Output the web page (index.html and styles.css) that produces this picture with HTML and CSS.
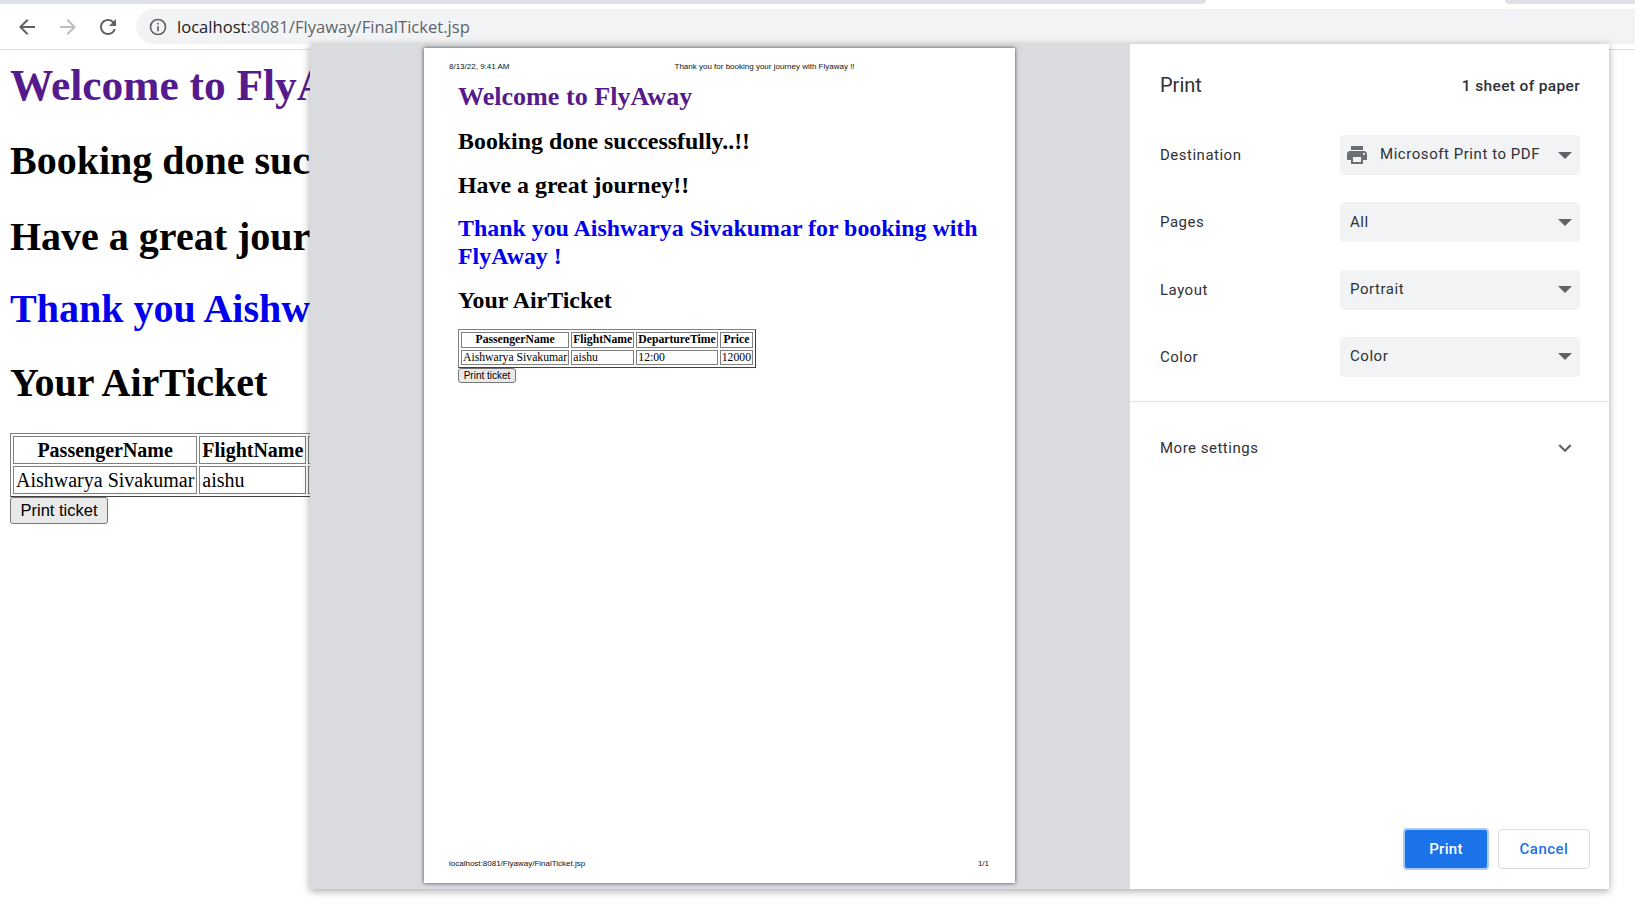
FILE: index.html

```html
<!DOCTYPE html>
<html>
<head>
  <title>FinalTicket</title>
  <link rel="stylesheet" href="styles.css">
</head>
<body>

  <div class="tabstrip">
    <div class="tab-gap left"></div>
    <div class="tab-gap right"></div>
  </div>

  <div class="toolbar">
    <svg class="nav-icon" viewBox="0 0 24 24"><path d="M20 11H7.83l5.59-5.59L12 4l-8 8 8 8 1.41-1.41L7.83 13H20v-2z"/></svg>
    <svg class="nav-icon disabled" viewBox="0 0 24 24"><path d="M4 11h12.17l-5.59-5.59L12 4l8 8-8 8-1.41-1.41L16.17 13H4v-2z"/></svg>
    <svg class="nav-icon" viewBox="0 0 24 24"><path d="M17.65 6.35A7.958 7.958 0 0 0 12 4c-4.42 0-7.99 3.58-7.99 8s3.57 8 7.99 8c3.73 0 6.84-2.55 7.73-6h-2.08A5.99 5.99 0 0 1 12 18c-3.31 0-6-2.69-6-6s2.69-6 6-6c1.66 0 3.14.69 4.22 1.78L13 11h7V4l-2.35 2.35z"/></svg>
    <div class="urlbar">
      <svg class="info-icon" viewBox="0 0 24 24"><path d="M11 7h2v2h-2zm0 4h2v6h-2zm1-9a10 10 0 1 0 0 20 10 10 0 0 0 0-20zm0 18a8 8 0 1 1 0-16 8 8 0 0 1 0 16z"/></svg>
      <span class="host">localhost</span><span class="path">:8081/Flyaway/FinalTicket.jsp</span>
    </div>
  </div>

  <div class="page">
    <h1 class="welcome">Welcome to FlyAway</h1>
    <h2>Booking done successfully..!!</h2>
    <h2>Have a great journey!!</h2>
    <h2 class="thanks">Thank you Aishwarya Sivakumar for booking with FlyAway !</h2>
    <h2>Your AirTicket</h2>
    <table>
      <tr><th>PassengerName</th><th>FlightName</th><th>DepartureTime</th><th>Price</th></tr>
      <tr><td>Aishwarya Sivakumar</td><td>aishu</td><td>12:00</td><td>12000</td></tr>
    </table>
    <button class="ticket-btn">Print ticket</button>
  </div>

  <div class="dialog">
    <div class="preview">
      <div class="sheet">
        <div class="sheet-header">
          <span>8/13/22, 9:41 AM</span>
          <span class="sheet-title">Thank you for booking your journey with Flyaway !!</span>
        </div>
        <div class="sheet-body">
          <h1 class="welcome">Welcome to FlyAway</h1>
          <h2>Booking done successfully..!!</h2>
          <h2>Have a great journey!!</h2>
          <h2 class="thanks">Thank you Aishwarya Sivakumar for booking with FlyAway !</h2>
          <h2>Your AirTicket</h2>
          <table>
            <tr><th>PassengerName</th><th>FlightName</th><th>DepartureTime</th><th>Price</th></tr>
            <tr><td>Aishwarya Sivakumar</td><td>aishu</td><td>12:00</td><td>12000</td></tr>
          </table>
          <button class="ticket-btn">Print ticket</button>
        </div>
        <div class="sheet-footer">
          <span>localhost:8081/Flyaway/FinalTicket.jsp</span>
          <span>1/1</span>
        </div>
      </div>
    </div>

    <div class="sidebar">
      <div class="side-head">
        <span class="side-title">Print</span>
        <span class="sheet-count">1 sheet of paper</span>
      </div>
      <div class="settings">
        <div class="row">
          <span class="row-label">Destination</span>
          <div class="select">
            <svg class="printer-icon" viewBox="0 0 24 24"><path d="M19 8H5c-1.66 0-3 1.34-3 3v6h4v4h12v-4h4v-6c0-1.66-1.34-3-3-3zm-3 11H8v-5h8v5zm3-7c-.55 0-1-.45-1-1s.45-1 1-1 1 .45 1 1-.45 1-1 1zm-1-9H6v4h12V3z"/></svg>
            <span class="select-text">Microsoft Print to PDF</span>
            <i class="caret"></i>
          </div>
        </div>
        <div class="row">
          <span class="row-label">Pages</span>
          <div class="select"><span class="select-text">All</span><i class="caret"></i></div>
        </div>
        <div class="row">
          <span class="row-label">Layout</span>
          <div class="select"><span class="select-text">Portrait</span><i class="caret"></i></div>
        </div>
        <div class="row">
          <span class="row-label">Color</span>
          <div class="select"><span class="select-text">Color</span><i class="caret"></i></div>
        </div>
      </div>
      <div class="more">
        <span class="row-label">More settings</span>
        <svg class="chevron" viewBox="0 0 24 24"><path d="M7.41 8.59 12 13.17l4.59-4.58L18 10l-6 6-6-6z"/></svg>
      </div>
      <div class="actions">
        <button class="btn-print">Print</button>
        <button class="btn-cancel">Cancel</button>
      </div>
    </div>
  </div>

</body>
</html>
```

FILE: styles.css

```css
html, body {
  height: 100%;
}
body {
  margin: 0;
  background: white;
  font-family: "Liberation Serif", serif;
  overflow: hidden;
}

/* browser chrome */
.tabstrip {
  display: flex;
  justify-content: space-between;
  height: 4px;
  background: white;
}
.tab-gap {
  background: #dee1e6;
}
.tab-gap.left {
  width: 1206px;
  border-bottom-right-radius: 6px;
}
.tab-gap.right {
  width: 130px;
  border-bottom-left-radius: 6px;
}
.toolbar {
  display: flex;
  align-items: center;
  height: 45px;
  border-bottom: 1px solid #dadce0;
}
.nav-icon {
  width: 24px;
  height: 24px;
  margin-left: 16px;
  fill: #5f6368;
  flex: none;
}
.nav-icon:first-child {
  margin-left: 15px;
}
.nav-icon.disabled {
  margin-left: 17px;
  fill: #babcbe;
}
.urlbar {
  flex: 1;
  display: flex;
  align-items: center;
  height: 35px;
  margin-left: 16px;
  padding-left: 12px;
  background: #f1f3f4;
  border-radius: 18px 0 0 18px;
  font-family: "Open Sans", sans-serif;
  font-size: 16.6px;
  color: #5f6368;
}
.info-icon {
  width: 20px;
  height: 20px;
  margin-right: 9px;
  fill: #5f6368;
}
.host {
  color: #202124;
}

/* page behind the dialog */
.page {
  padding: 0 10px;
}
h1, h2 {
  font-weight: bold;
  margin: 0;
}
.page h1 {
  font-size: 43.4px;
  line-height: 46px;
  margin-top: 12px;
}
.page h2 {
  font-size: 40px;
  line-height: 46px;
  margin-top: 30px;
}
.welcome {
  color: #551a8b;
}
.thanks {
  color: #0000ee;
}
.page .thanks {
  margin-top: 26px;
}
.page .thanks + h2 {
  margin-top: 28px;
}
table {
  border: 1px solid #808080;
  border-bottom-color: #404040;
  border-right-color: #404040;
  border-spacing: 2px;
}
th, td {
  border: 1px solid #808080;
  padding: 0 1px;
}
.page table {
  margin-top: 27px;
  font-size: 20px;
  line-height: 24px;
}
.page th, .page td {
  padding: 1px 2px;
}
.ticket-btn {
  display: block;
  font-family: "Liberation Sans", sans-serif;
  color: black;
  background: #e9e9e9;
  border: 1px solid #767676;
  border-radius: 3px;
}
.page .ticket-btn {
  width: 98px;
  height: 27px;
  padding: 0;
  font-size: 16.5px;
}

/* print dialog */
.dialog {
  position: absolute;
  left: 310px;
  top: 44px;
  width: 1299px;
  height: 845px;
  display: flex;
  box-shadow: 0 2px 8px rgba(0,0,0,0.35);
}
.preview {
  width: 820px;
  flex: none;
  background: #d9dbdf;
  padding: 4px 0 0 114px;
  box-sizing: border-box;
}
.sheet {
  width: 591px;
  height: 835px;
  display: flex;
  flex-direction: column;
  background: white;
  box-shadow: 0 0 4px rgba(0,0,0,0.7);
  box-sizing: border-box;
  padding: 14px 26px 15px 25px;
}
.sheet-header, .sheet-footer {
  display: flex;
  font-family: "Liberation Sans", sans-serif;
  font-size: 8px;
  line-height: 9px;
  color: #111;
}
.sheet-header {
  gap: 165px;
}
.sheet-footer {
  justify-content: space-between;
}
.sheet-body {
  flex: 1;
  padding: 0 9px;
}
.sheet h1 {
  font-size: 26.1px;
  line-height: 30px;
  margin-top: 11px;
}
.sheet h2 {
  font-size: 23.9px;
  line-height: 28px;
  margin-top: 15.4px;
}
.sheet table {
  margin-top: 15.6px;
  font-size: 11.7px;
  line-height: 13.5px;
}
.sheet .ticket-btn {
  width: 58px;
  height: 15px;
  padding: 0;
  font-size: 10px;
  line-height: 12px;
}

/* side panel */
.sidebar {
  flex: 1;
  display: flex;
  flex-direction: column;
  background: white;
  font-family: Roboto, sans-serif;
  color: #2f3134;
}
.side-head {
  display: flex;
  justify-content: space-between;
  align-items: center;
  height: 82px;
  padding: 0 29px 0 30px;
}
.side-title {
  font-size: 20px;
}
.sheet-count {
  font-size: 15.5px;
  font-weight: 500;
  letter-spacing: 0.35px;
  padding-top: 2px;
}
.settings {
  display: flex;
  flex-direction: column;
  gap: 27.3px;
  padding: 9px 29px 24px 30px;
  border-bottom: 1px solid #e3e4e6;
}
.row {
  display: flex;
  align-items: center;
  justify-content: space-between;
}
.row-label {
  font-size: 15px;
  letter-spacing: 0.5px;
}
.select {
  width: 240px;
  height: 40px;
  display: flex;
  align-items: center;
  padding: 0 8px 0 10px;
  box-sizing: border-box;
  background: #f1f3f4;
  border-radius: 4px;
}
.select-text {
  flex: 1;
  font-size: 15px;
  letter-spacing: 0.55px;
  margin-top: -1px;
}
.printer-icon {
  width: 24px;
  height: 24px;
  margin: 0 11px 0 -5px;
  fill: #6b6e73;
}
.printer-icon + .select-text {
  margin-top: -3px;
}
.caret {
  width: 0;
  height: 0;
  border-left: 7px solid transparent;
  border-right: 7px solid transparent;
  border-top: 7px solid #5f6368;
}
.more {
  display: flex;
  align-items: center;
  justify-content: space-between;
  height: 92px;
  padding: 0 29px 0 30px;
}
.chevron {
  width: 26px;
  height: 26px;
  fill: #5f6368;
  margin-right: 2px;
}
.actions {
  margin-top: auto;
  display: flex;
  justify-content: flex-end;
  align-items: center;
  gap: 9px;
  padding: 0 19px 19px 0;
}
.actions button {
  font-family: Roboto, sans-serif;
  font-size: 15px;
  font-weight: 500;
  border-radius: 4px;
  cursor: pointer;
}
.btn-print {
  width: 86px;
  height: 42px;
  background: #1a73e8;
  color: white;
  border: 2px solid #a9cbf6;
  letter-spacing: 0.3px;
}
.btn-cancel {
  width: 92px;
  height: 40px;
  background: white;
  color: #1a73e8;
  border: 1px solid #dadce0;
  letter-spacing: 0.5px;
}
```
